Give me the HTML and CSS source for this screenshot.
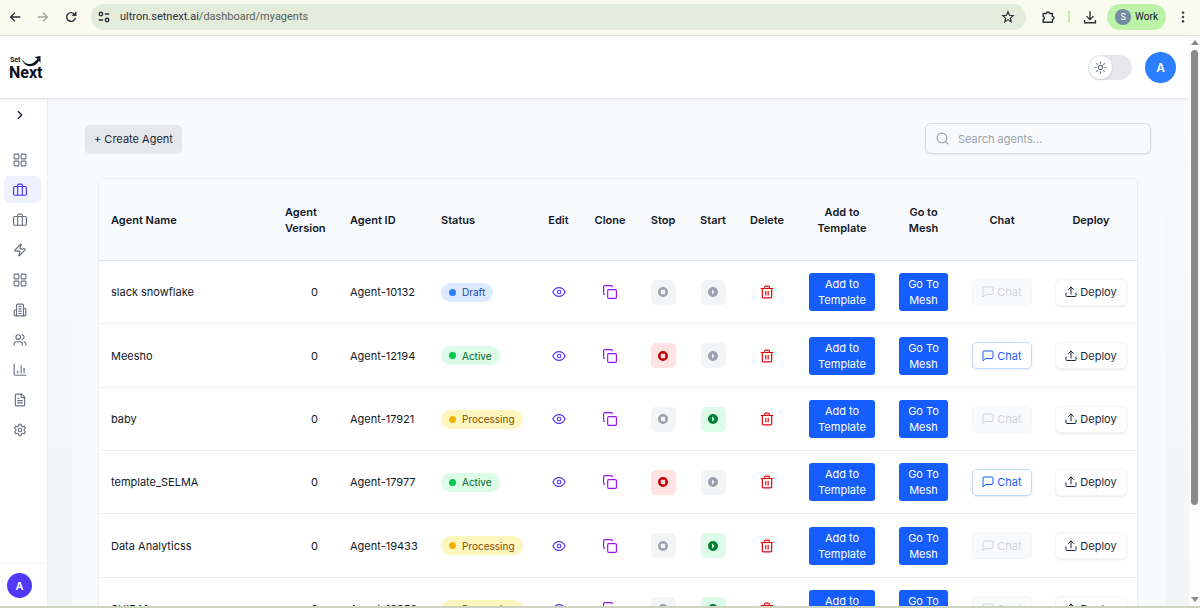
FILE: index.html
```html
<!DOCTYPE html>
<html lang="en">
<head>
  <meta charset="UTF-8">
  <meta name="viewport" content="width=device-width, initial-scale=1.0">
  <title>My Agents</title>
  <link rel="stylesheet" href="styles.css">
</head>
<body>
  <!-- Icon definitions -->
  <svg class="icon-defs" aria-hidden="true">
    <symbol id="i-grid" viewBox="0 0 24 24"><rect x="2" y="2" width="8" height="8" rx="1"/><rect x="14" y="2" width="8" height="8" rx="1"/><rect x="14" y="14" width="8" height="8" rx="1"/><rect x="2" y="14" width="8" height="8" rx="1"/></symbol>
    <symbol id="i-briefcase" viewBox="0 0 24 24"><path d="M16 21V4a2 2 0 0 0-2-2h-4a2 2 0 0 0-2 2v17"/><rect x="1" y="6" width="22" height="15" rx="2"/></symbol>
    <symbol id="i-zap" viewBox="0 0 24 24"><path d="M4 14a1 1 0 0 1-.78-1.63l9.9-10.2a.5.5 0 0 1 .86.46l-1.92 6.02A1 1 0 0 0 13 10h7a1 1 0 0 1 .78 1.63l-9.9 10.2a.5.5 0 0 1-.86-.46l1.92-6.02A1 1 0 0 0 11 14z"/></symbol>
    <symbol id="i-building" viewBox="0 0 24 24"><path d="M6 22V4a2 2 0 0 1 2-2h8a2 2 0 0 1 2 2v18Z"/><path d="M6 12H4a2 2 0 0 0-2 2v6a2 2 0 0 0 2 2h2"/><path d="M18 9h2a2 2 0 0 1 2 2v9a2 2 0 0 1-2 2h-2"/><path d="M10 6h4M10 10h4M10 14h4M10 18h4"/></symbol>
    <symbol id="i-users" viewBox="0 0 24 24"><path d="M16 21v-2a4 4 0 0 0-4-4H6a4 4 0 0 0-4 4v2"/><circle cx="9" cy="7" r="4"/><path d="M22 21v-2a4 4 0 0 0-3-3.87"/><path d="M16 3.13a4 4 0 0 1 0 7.75"/></symbol>
    <symbol id="i-chart" viewBox="0 0 24 24"><path d="M2 2v17a2 2 0 0 0 2 2h18"/><path d="M19 17V9"/><path d="M14 17V5"/><path d="M8 17v-3"/></symbol>
    <symbol id="i-file" viewBox="0 0 24 24"><path d="M15 2H6a2 2 0 0 0-2 2v16a2 2 0 0 0 2 2h12a2 2 0 0 0 2-2V7Z"/><path d="M14 2v4a2 2 0 0 0 2 2h4"/><path d="M10 9H8M16 13H8M16 17H8"/></symbol>
    <symbol id="i-settings" viewBox="0 0 24 24"><path d="M9.671 4.136a2.34 2.34 0 0 1 4.659 0 2.34 2.34 0 0 0 3.319 1.915 2.34 2.34 0 0 1 2.33 4.033 2.34 2.34 0 0 0 0 3.831 2.34 2.34 0 0 1-2.33 4.033 2.34 2.34 0 0 0-3.319 1.915 2.34 2.34 0 0 1-4.659 0 2.34 2.34 0 0 0-3.32-1.915 2.34 2.34 0 0 1-2.33-4.033 2.34 2.34 0 0 0 0-3.831A2.34 2.34 0 0 1 6.35 6.051a2.34 2.34 0 0 0 3.319-1.915"/><circle cx="12" cy="12" r="3"/></symbol>
    <symbol id="i-chevron" viewBox="0 0 24 24"><path d="m9 18 6-6-6-6"/></symbol>
    <symbol id="i-sun" viewBox="0 0 24 24"><circle cx="12" cy="12" r="4"/><path d="M12 2v2M12 20v2M4.93 4.93l1.41 1.41M17.66 17.66l1.41 1.41M2 12h2M20 12h2M6.34 17.66l-1.41 1.41M19.07 4.93l-1.41 1.41"/></symbol>
    <symbol id="i-search" viewBox="0 0 24 24"><circle cx="11" cy="11" r="9"/><path d="m22 22-4.500-4.500"/></symbol>
    <symbol id="i-eye" viewBox="0 0 24 24"><path d="M1.500 12S5 4.500 12 4.500 22.500 12 22.500 12 19 19.500 12 19.500 1.500 12 1.500 12z"/><circle cx="12" cy="12" r="3"/></symbol>
    <symbol id="i-copy" viewBox="0 0 24 24"><rect x="8" y="8" width="15" height="15" rx="2"/><path d="M3 16a2 2 0 0 1-2-2V3a2 2 0 0 1 2-2h11a2 2 0 0 1 2 2"/></symbol>
    <symbol id="i-trash" viewBox="0 0 24 24"><path d="M2 6h20M4 6v14a2 2 0 0 0 2 2h12a2 2 0 0 0 2-2V6M8 6V4a2 2 0 0 1 2-2h4a2 2 0 0 1 2 2v2M10 11v6M14 11v6"/></symbol>
    <symbol id="i-stop" viewBox="0 0 16 16"><path fill="currentColor" stroke="none" fill-rule="evenodd" d="M8 0a8 8 0 1 0 0 16A8 8 0 0 0 8 0zM5.500 4.500h5a1 1 0 0 1 1 1v5a1 1 0 0 1-1 1h-5a1 1 0 0 1-1-1v-5a1 1 0 0 1 1-1z"/></symbol>
    <symbol id="i-play" viewBox="0 0 16 16"><path fill="currentColor" stroke="none" fill-rule="evenodd" d="M8 0a8 8 0 1 0 0 16A8 8 0 0 0 8 0zM6.500 3.500v9L10.500 8z"/></symbol>
    <symbol id="i-chat" viewBox="0 0 24 24"><path d="M22 15a2 2 0 0 1-2 2H7l-5 5V4a2 2 0 0 1 2-2h16a2 2 0 0 1 2 2z"/></symbol>
    <symbol id="i-upload" viewBox="0 0 24 24"><path d="M2 14v5a2 2 0 0 0 2 2h16a2 2 0 0 0 2-2v-5"/><path d="m17 7-5-5-5 5"/><path d="M12 2v14"/></symbol>
  </svg>

  <!-- Browser toolbar -->
  <div class="browser-bar">
    <button class="nav-btn" aria-label="Back"><svg viewBox="0 0 16 16"><path d="M14 8H3M8 3 3 8l5 5"/></svg></button>
    <button class="nav-btn muted" aria-label="Forward"><svg viewBox="0 0 16 16"><path d="M2 8h11M8 3l5 5-5 5"/></svg></button>
    <button class="nav-btn" aria-label="Reload"><svg viewBox="0 0 16 16"><path d="M13 9a5 5 0 1 1-1.300-4.500L13.500 6M13.500 2v4h-4"/></svg></button>
    <div class="address">
      <svg class="site-icon" viewBox="0 0 16 16"><circle cx="4.500" cy="4.500" r="2"/><path d="M9 4.500h5M2 11.500h5"/><circle cx="11.500" cy="11.500" r="2"/></svg>
      <span class="url">ultron.setnext.ai<span class="path">/dashboard/myagents</span></span>
      <svg class="star" viewBox="0 0 16 16"><path d="m8 2 1.700 4 4.300.4-3.300 2.900 1 4.200L8 11.200l-3.700 2.300 1-4.200L2 6.400 6.300 6z"/></svg>
    </div>
    <button class="nav-btn" aria-label="Extensions"><svg viewBox="0 0 16 16"><path d="M2.500 4h3.700a1.800 1.800 0 0 1 3.600 0H13v3.300a1.800 1.800 0 0 1 0 3.600V14H2.500v-3.200a1.900 1.900 0 0 0 0-3.600z"/></svg></button>
    <span class="bar-divider"></span>
    <button class="nav-btn" aria-label="Downloads"><svg viewBox="0 0 16 16"><path d="M8 1.500v9M4 7l4 4 4-4M1.800 11.500v3h12.400v-3"/></svg></button>
    <button class="profile"><span class="profile-pic">S</span>Work</button>
    <button class="nav-btn menu-btn" aria-label="Menu"><svg viewBox="0 0 16 16"><circle cx="8" cy="3" r="1"/><circle cx="8" cy="8" r="1"/><circle cx="8" cy="13" r="1"/></svg></button>
  </div>

  <div class="window">
    <div class="app">
      <header class="app-header">
        <svg class="logo" width="36" height="28" viewBox="0 0 36 28" role="img" aria-label="Set Next">
          <text class="logo-small" x="1" y="9">Set</text>
          <text class="logo-big" x="0" y="25">Next</text>
          <path d="M12 5.500C16 11 20 12 24 10c2-1 3.500-2.500 4.500-4.200L25.500 4 31.500 3v7L30 7.800C28 11 25 13.500 21 13.300 17 13 14 10 12 5.500z"/>
        </svg>
        <div class="header-actions">
          <button class="theme-toggle" aria-label="Toggle theme"><span class="knob"><svg class="icon"><use href="#i-sun"/></svg></span></button>
          <button class="avatar">A</button>
        </div>
      </header>

      <div class="app-body">
        <aside class="sidebar">
          <button class="expand" aria-label="Expand sidebar"><svg class="icon"><use href="#i-chevron"/></svg></button>
          <nav class="side-nav">
            <a href="#" aria-label="Dashboard"><svg class="icon"><use href="#i-grid"/></svg></a>
            <a href="#" class="active" aria-label="My Agents"><svg class="icon"><use href="#i-briefcase"/></svg></a>
            <a href="#" aria-label="Workspace"><svg class="icon"><use href="#i-briefcase"/></svg></a>
            <a href="#" aria-label="Automations"><svg class="icon"><use href="#i-zap"/></svg></a>
            <a href="#" aria-label="Templates"><svg class="icon"><use href="#i-grid"/></svg></a>
            <a href="#" aria-label="Organization"><svg class="icon"><use href="#i-building"/></svg></a>
            <a href="#" aria-label="Users"><svg class="icon"><use href="#i-users"/></svg></a>
            <a href="#" aria-label="Analytics"><svg class="icon"><use href="#i-chart"/></svg></a>
            <a href="#" aria-label="Documents"><svg class="icon"><use href="#i-file"/></svg></a>
            <a href="#" aria-label="Settings"><svg class="icon"><use href="#i-settings"/></svg></a>
          </nav>
          <div class="sidebar-footer"><button class="avatar small">A</button></div>
        </aside>

        <main class="main">
          <div class="panel">
            <div class="toolbar">
              <button class="create-btn">+ Create Agent</button>
              <label class="search">
                <svg class="icon"><use href="#i-search"/></svg>
                <input type="text" placeholder="Search agents..." aria-label="Search agents">
              </label>
            </div>
            <div class="table-card">
              <table>
                <colgroup>
                  <col><col class="c-version"><col class="c-id"><col class="c-status"><col class="c-edit"><col class="c-clone"><col class="c-run"><col class="c-run"><col class="c-delete"><col class="c-template"><col class="c-mesh"><col class="c-chat"><col class="c-deploy">
                </colgroup>
                <thead>
                  <tr>
                    <th>Agent Name</th>
                    <th>Agent Version</th>
                    <th>Agent ID</th>
                    <th>Status</th>
                    <th class="center">Edit</th>
                    <th class="center">Clone</th>
                    <th class="center">Stop</th>
                    <th class="center">Start</th>
                    <th class="center">Delete</th>
                    <th class="center">Add to Template</th>
                    <th class="center">Go to Mesh</th>
                    <th class="center">Chat</th>
                    <th class="center">Deploy</th>
                  </tr>
                </thead>
                <tbody id="agentRows"></tbody>
              </table>
            </div>
          </div>
        </main>
      </div>
    </div>

    <div class="scrollbar" aria-hidden="true">
      <span class="arrow up"></span>
      <div class="track"><div class="thumb"></div></div>
      <span class="arrow down"></span>
    </div>
  </div>

  <script>
    const agents = [
      { name: 'slack snowflake', version: 0, id: 'Agent-10132', status: 'Draft' },
      { name: 'Meesho', version: 0, id: 'Agent-12194', status: 'Active' },
      { name: 'baby', version: 0, id: 'Agent-17921', status: 'Processing' },
      { name: 'template_SELMA', version: 0, id: 'Agent-17977', status: 'Active' },
      { name: 'Data Analyticss', version: 0, id: 'Agent-19433', status: 'Processing' },
      { name: 'SHIBA1', version: 0, id: 'Agent-19859', status: 'Processing' }
    ];

    function icon(name) {
      return `<svg class="icon"><use href="#i-${name}"/></svg>`;
    }

    // Stop and chat need a running agent, start needs one that is ready
    document.getElementById('agentRows').innerHTML = agents.map(agent => {
      const running = agent.status === 'Active';
      const ready = agent.status === 'Processing';
      return `
        <tr>
          <td>${agent.name}</td>
          <td class="version">${agent.version}</td>
          <td>${agent.id}</td>
          <td><span class="badge ${agent.status.toLowerCase()}">${agent.status}</span></td>
          <td class="center"><button class="icon-btn edit" aria-label="Edit">${icon('eye')}</button></td>
          <td class="center"><button class="icon-btn clone" aria-label="Clone">${icon('copy')}</button></td>
          <td class="center"><button class="run-btn stop" aria-label="Stop" ${running ? '' : 'disabled'}>${icon('stop')}</button></td>
          <td class="center"><button class="run-btn start" aria-label="Start" ${ready ? '' : 'disabled'}>${icon('play')}</button></td>
          <td class="center"><button class="icon-btn delete" aria-label="Delete">${icon('trash')}</button></td>
          <td class="center"><button class="primary-btn">Add to<br>Template</button></td>
          <td class="center"><button class="primary-btn">Go To<br>Mesh</button></td>
          <td class="center"><button class="outline-btn chat" ${running ? '' : 'disabled'}>${icon('chat')}Chat</button></td>
          <td class="center"><button class="outline-btn">${icon('upload')}Deploy</button></td>
        </tr>`;
    }).join('');
  </script>
</body>
</html>
```
FILE: styles.css
```css
* {
  box-sizing: border-box;
}

body {
  margin: 0;
  height: 100vh;
  display: flex;
  flex-direction: column;
  overflow: hidden;
  font-family: Inter, "Liberation Sans", sans-serif;
  font-size: 11px;
  color: #101828;
  background-color: #fff;
  border-bottom: 2px solid #cfd3c1;
}

button {
  font: inherit;
  color: inherit;
  border: none;
  background: none;
  padding: 0;
  cursor: pointer;
}

svg {
  display: block;
  flex-shrink: 0;
}

.icon-defs {
  position: absolute;
  width: 0;
  height: 0;
}

.icon {
  width: 14px;
  height: 14px;
  fill: none;
  stroke: currentColor;
  stroke-width: 2;
  stroke-linecap: round;
  stroke-linejoin: round;
}

/* Browser toolbar */
.browser-bar {
  display: flex;
  align-items: center;
  flex-shrink: 0;
  height: 36px;
  padding: 0 9px 2px 7px;
  background-color: #f9fbef;
  border-bottom: 1px solid #dfe2d6;
}

.nav-btn {
  width: 16px;
  margin-right: 12px;
  color: #2b303b;
}

.nav-btn svg,
.site-icon,
.star {
  width: 14px;
  height: 14px;
  margin: 0 auto;
  fill: none;
  stroke: currentColor;
  stroke-width: 1.6;
}

.nav-btn.muted {
  color: #9ea39c;
}

.address {
  display: flex;
  align-items: center;
  flex: 1;
  height: 26px;
  margin-right: 14px;
  padding: 0 11px 0 6px;
  border-radius: 13px;
  background-color: #e3ecda;
  color: #2b303b;
}

.address .site-icon,
.address .star {
  margin: 0;
}

.address .star {
  margin-left: auto;
  stroke-width: 1.3;
}

.url {
  margin-left: 9px;
  font-family: Roboto, sans-serif;
}

.url .path {
  color: #5a6057;
}

.bar-divider {
  width: 2px;
  height: 12px;
  margin-right: 12px;
  background-color: #bdf0a8;
}

.profile {
  display: flex;
  align-items: center;
  gap: 4px;
  height: 26px;
  margin: 0 9px 0 -3px;
  padding: 0 8px;
  border-radius: 13px;
  background-color: #bdf2a9;
  font-family: Roboto, sans-serif;
  font-size: 10px;
}

.profile-pic {
  width: 16px;
  height: 16px;
  border-radius: 50%;
  background-color: #758ba0;
  color: #fff;
  font-size: 9px;
  line-height: 16px;
}

.menu-btn {
  margin-right: 0;
}

.menu-btn svg {
  fill: currentColor;
  stroke-width: 1;
}

/* Page area with its scrollbar */
.window {
  display: flex;
  flex: 1;
  min-height: 0;
}

.app {
  display: flex;
  flex-direction: column;
  flex: 1;
  min-width: 0;
}

.app-header {
  display: flex;
  align-items: center;
  justify-content: space-between;
  flex-shrink: 0;
  height: 63px;
  padding: 0 13px 0 9px;
  border-bottom: 1px solid #e5e7eb;
  box-shadow: 0 1px 2px rgba(0, 0, 0, 0.06);
  z-index: 1;
}

.logo {
  fill: #0a0f1f;
  font-family: Roboto, sans-serif;
  font-weight: 700;
}

.logo-small {
  font-size: 7px;
}

.logo-big {
  font-size: 16px;
}

.header-actions {
  display: flex;
  align-items: center;
  gap: 13px;
}

.theme-toggle {
  width: 44px;
  height: 25px;
  padding: 1px;
  border-radius: 13px;
  background-color: #e5e7eb;
}

.knob {
  display: flex;
  align-items: center;
  justify-content: center;
  width: 23px;
  height: 23px;
  border-radius: 50%;
  background-color: #fff;
  color: #6a7282;
  box-shadow: 0 1px 2px rgba(0, 0, 0, 0.15);
}

.knob .icon {
  width: 13px;
  height: 13px;
}

.avatar {
  width: 31px;
  height: 31px;
  border-radius: 50%;
  background-color: #2b7fff;
  color: #fff;
  font-size: 12px;
  font-weight: 600;
}

.avatar.small {
  width: 25px;
  height: 25px;
  background-color: #4f39f6;
  font-size: 11px;
}

.app-body {
  display: flex;
  flex: 1;
  min-height: 0;
}

/* Sidebar */
.sidebar {
  display: flex;
  flex-direction: column;
  width: 48px;
  background-color: #fff;
  border-right: 1px solid #eceef1;
  box-shadow: 1px 0 3px rgba(0, 0, 0, 0.06);
}

.expand {
  width: 40px;
  height: 32px;
}

.expand .icon {
  margin: 0 auto;
}

.side-nav {
  display: flex;
  flex-direction: column;
  gap: 3px;
  padding: 15px 6px 0 4px;
}

.side-nav a {
  display: flex;
  align-items: center;
  height: 27px;
  padding-left: 9px;
  border-radius: 5px;
  color: #6a7282;
}

.side-nav a.active {
  background-color: #eef2ff;
  color: #4f39f6;
}

.sidebar-footer {
  margin-top: auto;
  padding: 9px 7px 8px;
  border-top: 1px solid #f3f4f6;
}

/* Main content */
.main {
  flex: 1;
  min-width: 0;
  padding: 0 24px;
  overflow: hidden;
  background: linear-gradient(#f9fafb, #f3f4f6);
}

.panel {
  padding: 24px 14px 24px 13px;
  background-color: #f9fafb;
}

.toolbar {
  display: flex;
  align-items: center;
  justify-content: space-between;
}

.create-btn {
  height: 28px;
  padding: 0 9px;
  border-radius: 5px;
  background-color: #e5e7eb;
  color: #1e2939;
  box-shadow: 0 1px 2px rgba(0, 0, 0, 0.06);
}

.search {
  display: flex;
  align-items: center;
  gap: 9px;
  width: 226px;
  height: 31px;
  padding: 0 10px;
  border: 1px solid #d8dbe0;
  border-radius: 6px;
  color: #99a1af;
  box-shadow: 0 1px 2px rgba(0, 0, 0, 0.08);
}

.search .icon {
  width: 13px;
  height: 13px;
}

.search input {
  flex: 1;
  min-width: 0;
  padding: 0;
  border: none;
  outline: none;
  background: none;
  font: inherit;
  color: #101828;
}

.search input::placeholder {
  color: #99a1af;
}

/* Agents table */
.table-card {
  margin: 24px 13px 0;
  border: 1px solid #eceef1;
  border-radius: 6px;
  overflow: hidden;
  background-color: #fff;
}

table {
  width: 100%;
  table-layout: fixed;
  border-collapse: separate;
  border-spacing: 0;
}

.c-version { width: 65px; }
.c-id { width: 91px; }
.c-status { width: 106px; }
.c-edit { width: 47px; }
.c-clone { width: 56px; }
.c-run { width: 50px; }
.c-delete { width: 58px; }
.c-template { width: 92px; }
.c-mesh { width: 71px; }
.c-chat { width: 86px; }
.c-deploy { width: 92px; }

th {
  height: 82px;
  padding: 0 12px;
  border-bottom: 1px solid #dfe3ea;
  background-color: #f9fafb;
  font-weight: 600;
  line-height: 16px;
  text-align: left;
}

td {
  height: 63px;
  padding: 0 12px;
  border-bottom: 1px solid #eef0f2;
  white-space: nowrap;
}

tr:nth-child(3n+2) td {
  height: 64px;
}

td.version {
  padding-right: 20px;
  text-align: right;
}

th.center,
td.center {
  padding: 0;
  text-align: center;
}

th.center:nth-child(10) {
  padding: 0 20px;
}

th.center:nth-child(11) {
  padding: 0 18px;
}

/* Status badges */
.badge {
  display: inline-flex;
  align-items: center;
  gap: 6px;
  height: 19px;
  padding: 0 8px;
  border-radius: 10px;
  font-size: 10px;
}

.badge::before {
  content: "";
  width: 7px;
  height: 7px;
  border-radius: 50%;
}

.badge.draft {
  background-color: #dbeafe;
  color: #1447b6;
}

.badge.draft::before {
  background-color: #2b7fff;
}

.badge.active {
  background-color: #dcfce7;
  color: #016630;
}

.badge.active::before {
  background-color: #00c950;
}

.badge.processing {
  background-color: #fef6bf;
  color: #894b00;
}

.badge.processing::before {
  background-color: #f0b100;
}

/* Row actions */
.icon-btn,
.run-btn {
  display: inline-flex;
  align-items: center;
  justify-content: center;
  width: 25px;
  height: 25px;
  border-radius: 5px;
  vertical-align: middle;
}

.edit { color: #4f39f6; }
.clone { color: #9810fa; }
.delete { color: #e7000b; }

.run-btn .icon {
  width: 10px;
  height: 10px;
}

.stop {
  background-color: #ffe2e2;
  color: #c10007;
}

.start {
  background-color: #dcfce7;
  color: #008236;
}

.run-btn:disabled {
  background-color: #f3f4f6;
  color: #99a1af;
}

.primary-btn {
  padding: 3px 9px;
  border-radius: 3px;
  background-color: #155dfc;
  color: #fff;
  line-height: 16px;
  vertical-align: middle;
}

.outline-btn {
  display: inline-flex;
  align-items: center;
  gap: 3px;
  height: 27px;
  padding: 0 9px;
  border: 1px solid #f3f4f6;
  border-radius: 5px;
  background-color: #fff;
  color: #1e2939;
  vertical-align: middle;
  box-shadow: 0 1px 2px rgba(0, 0, 0, 0.08);
}

.outline-btn .icon {
  width: 12px;
  height: 12px;
}

.outline-btn.chat {
  border-color: #bedbff;
  color: #155dfc;
}

.outline-btn.chat:disabled {
  border-color: #f5f6f8;
  background-color: #f9fafb;
  color: #d1d5dc;
  box-shadow: none;
}

/* Scrollbar */
.scrollbar {
  display: flex;
  flex-direction: column;
  align-items: center;
  width: 11px;
  padding: 4px 0;
  background-color: #fcfcfc;
}

.arrow {
  border: 4px solid transparent;
}

.arrow.up {
  border-top: none;
  border-bottom: 5px solid #8b8b8b;
}

.arrow.down {
  border-bottom: none;
  border-top: 5px solid #8b8b8b;
}

.track {
  flex: 1;
  width: 7px;
  padding: 5px 0;
}

.thumb {
  height: 84%;
  border-radius: 4px;
  background-color: #8b8b8b;
}
```
